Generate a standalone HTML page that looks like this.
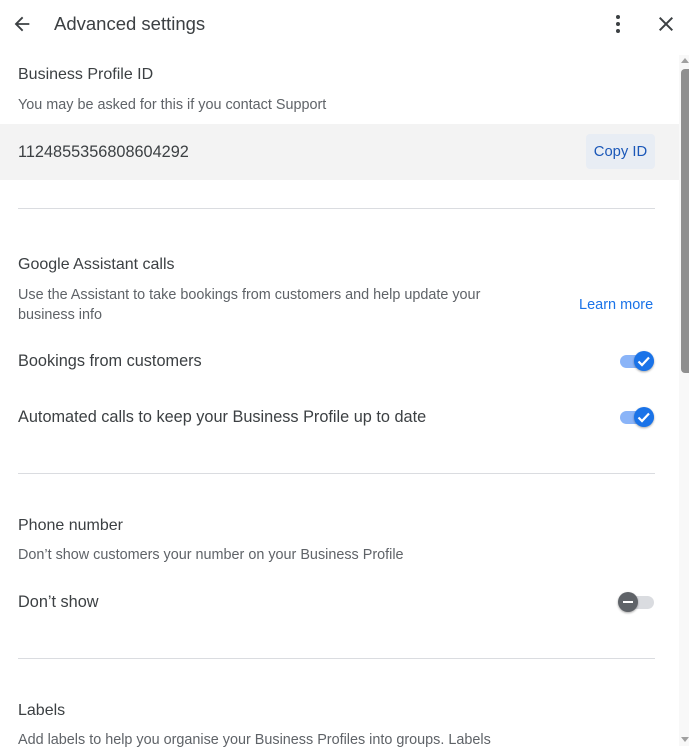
<!DOCTYPE html>
<html><head><meta charset="utf-8"><style>
*{margin:0;padding:0;box-sizing:border-box}
body{width:689px;height:746px;overflow:hidden;background:#fff;font-family:"Liberation Sans",Arial,sans-serif;color:#3c4043;position:relative}
.a{position:absolute;white-space:nowrap}
.h{font-size:16px;color:#3c4043}
.s{font-size:14.4px;color:#5f6368}
.t{font-size:16.3px;color:#3c4043}
.hr{position:absolute;left:18px;width:637px;height:1px;background:#dadce0}
.tg{position:absolute;width:36px;height:24px}
.tr{position:absolute;left:2px;top:6px;width:34px;height:13px;border-radius:7px}
.kn{position:absolute;top:2px;width:20px;height:20px;border-radius:50%;box-shadow:0 1px 2px rgba(0,0,0,.35)}
</style></head><body>
<svg class="a" style="left:11px;top:13px" width="22" height="22" viewBox="0 0 24 24"><path d="M20 11H7.83l5.59-5.59L12 4l-8 8 8 8 1.41-1.41L7.83 13H20v-2z" fill="#3c4043"/></svg>
<div class="a" style="left:54px;top:13px;font-size:18.5px;color:#3c4043">Advanced settings</div>
<svg class="a" style="left:606px;top:12px" width="24" height="24" viewBox="0 0 24 24"><circle cx="12" cy="5" r="2" fill="#3c4043"/><circle cx="12" cy="12" r="2" fill="#3c4043"/><circle cx="12" cy="19" r="2" fill="#3c4043"/></svg>
<svg class="a" style="left:654px;top:12px" width="24" height="24" viewBox="0 0 24 24"><path d="M19 6.41L17.59 5 12 10.59 6.41 5 5 6.41 10.59 12 5 17.59 6.41 19 12 13.41 17.59 19 19 17.59 13.41 12z" fill="#3c4043"/></svg>

<div class="a h" style="left:18px;top:66px">Business Profile ID</div>
<div class="a s" style="left:18px;top:97px">You may be asked for this if you contact Support</div>
<div class="a" style="left:0;top:124px;width:679px;height:56px;background:#f3f3f3"></div>
<div class="a t" style="left:18px;top:143px">1124855356808604292</div>
<div class="a" style="left:586px;top:134px;width:69px;height:35px;background:#e8edf4;border-radius:4px;color:#1a57b8;font-size:14.8px;text-align:center;line-height:37px">Copy ID</div>
<div class="hr" style="top:208px"></div>

<div class="a h" style="left:18px;top:256px">Google Assistant calls</div>
<div class="a s" style="left:18px;top:286px;line-height:19.5px;white-space:normal;width:490px">Use the Assistant to take bookings from customers and help update your business info</div>
<div class="a" style="left:579px;top:297px;font-size:14.5px;color:#1a73e8">Learn more</div>
<div class="a t" style="left:18px;top:352px">Bookings from customers</div>
<div class="a t" style="left:18px;top:408px">Automated calls to keep your Business Profile up to date</div>
<div class="tg" style="left:618px;top:349px"><div class="tr" style="background:#8ab4f8"></div><div class="kn" style="left:16px;background:#1a73e8"><svg width="20" height="20" viewBox="0 0 20 20"><path d="M4.5 10.5l3.5 3.5 7-7.5" stroke="#fff" stroke-width="2.2" fill="none"/></svg></div></div>
<div class="tg" style="left:618px;top:405px"><div class="tr" style="background:#8ab4f8"></div><div class="kn" style="left:16px;background:#1a73e8"><svg width="20" height="20" viewBox="0 0 20 20"><path d="M4.5 10.5l3.5 3.5 7-7.5" stroke="#fff" stroke-width="2.2" fill="none"/></svg></div></div>
<div class="hr" style="top:473px"></div>

<div class="a h" style="left:18px;top:517px">Phone number</div>
<div class="a s" style="left:18px;top:547px">Don’t show customers your number on your Business Profile</div>
<div class="a t" style="left:18px;top:593px">Don’t show</div>
<div class="tg" style="left:618px;top:590px"><div class="tr" style="background:#dadce0;left:2px"></div><div class="kn" style="left:0;background:#5f6368"><div style="position:absolute;left:5px;top:9px;width:10px;height:2px;background:#fff"></div></div></div>
<div class="hr" style="top:658px"></div>

<div class="a h" style="left:18px;top:702px">Labels</div>
<div class="a s" style="left:18px;top:732px">Add labels to help you organise your Business Profiles into groups. Labels</div>

<div class="a" style="left:679px;top:55px;width:10px;height:691px;background:#f8f8f8"></div>
<div class="a" style="left:681px;top:58px;width:0;height:0;border-left:4px solid transparent;border-right:4px solid transparent;border-bottom:5px solid #a0a0a0"></div>
<div class="a" style="left:681px;top:69px;width:8px;height:304px;background:#8f8f8f;border-radius:4px 0 0 4px"></div>
<div class="a" style="left:681px;top:737px;width:0;height:0;border-left:4px solid transparent;border-right:4px solid transparent;border-top:5px solid #a0a0a0"></div>
</body></html>
